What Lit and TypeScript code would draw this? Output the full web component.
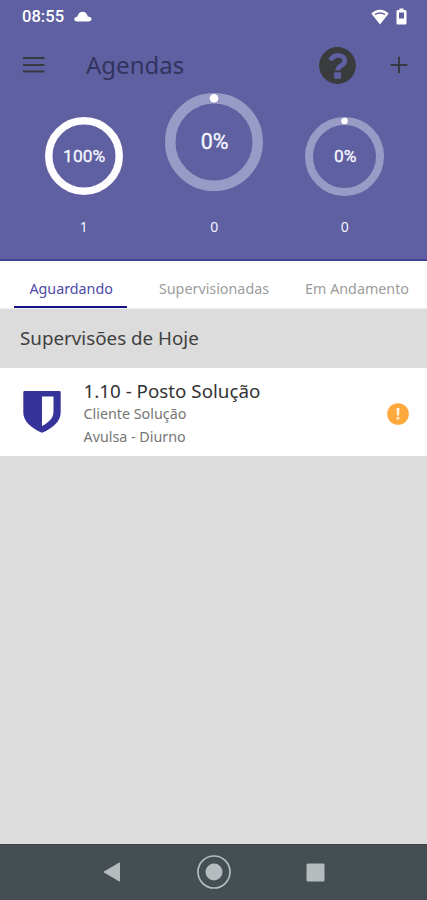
import { LitElement, html, svg, css, nothing } from "lit";
import { customElement, property } from "lit/decorators.js";

@customElement("progress-ring")
class ProgressRing extends LitElement {
  @property({ type: Number }) size = 78;
  @property({ type: Number }) stroke = 8;
  @property({ type: Number }) value = 0;

  static styles = css`
    :host { display: grid; place-items: center; }
    svg, span { grid-area: 1 / 1; }
    svg { display: block; }
    span {
      font-family: Roboto, sans-serif;
      color: #f6f7ff;
      line-height: 1;
      font-weight: 400;
      font-size: 17.4px;
      padding: 1px 0 0 1px;
      -webkit-text-stroke: 0.3px #f6f7ff;
    }
    .large { font-size: 21.5px; padding-top: 0; }
    .track { fill: none; stroke: #989bc6; }
    .full { fill: none; stroke: #fdfdff; }
    .dot { fill: #fff; }
  `;

  render() {
    const c = this.size / 2;
    const r = c - this.stroke / 2;
    return html`
      <svg width=${this.size} height=${this.size} viewBox="0 0 ${this.size} ${this.size}">
        <circle class=${this.value >= 100 ? "full" : "track"} cx=${c} cy=${c} r=${r} stroke-width=${this.stroke}></circle>
        ${this.value === 0
          ? svg`<circle class="dot" cx=${c} cy=${this.stroke / 2} r=${this.stroke * 0.41}></circle>`
          : nothing}
      </svg>
      <span class=${this.size > 90 ? "large" : ""}>${this.value}%</span>
    `;
  }
}

@customElement("app-root")
class AppRoot extends LitElement {
  static styles = css`
    :host {
      display: flex;
      flex-direction: column;
      height: 900px;
      width: 427px;
      overflow: hidden;
      background: #dcdcdc;
      font-family: "Noto Sans", sans-serif;
      white-space: nowrap;
    }
    * { box-sizing: border-box; }
    svg { display: block; flex: none; }
    .top {
      height: 261px;
      flex: none;
      background: #5e60a1;
      border-bottom: 2px solid #42429a;
      display: flex;
      flex-direction: column;
    }
    .status {
      height: 33px;
      padding: 0 20px 0 22px;
      display: flex;
      align-items: center;
      color: #fff;
      font: 500 16.6px/33px Roboto, sans-serif;
    }
    .cloud { margin-left: 10px; }
    .wifi { margin-left: auto; margin-right: 7px; }
    .bar {
      height: 64px;
      padding: 0 19px 0 23px;
      display: flex;
      align-items: center;
    }
    .title {
      margin-left: 41px;
      font-size: 24px;
      line-height: 32px;
      color: #34335f;
    }
    .help { margin-left: auto; margin-right: 34.5px; }
    .rings {
      margin-top: -5px;
      padding: 0 17px 0 18.4px;
      display: grid;
      grid-template-columns: repeat(3, 1fr);
    }
    .stat { display: flex; flex-direction: column; align-items: center; }
    .dial { height: 128px; display: flex; align-items: center; }
    .dial progress-ring { margin-bottom: 28px; }
    .dial.side progress-ring { margin-bottom: 0; }
    .count {
      font: 400 14px/16px "Noto Sans", sans-serif;
      color: #f2f3ff;
      margin-top: -1px;
    }
    .tabs {
      height: 48px;
      flex: none;
      background: #fff;
      display: grid;
      grid-template-columns: repeat(3, 1fr);
      border-bottom: 1px solid #efefef;
    }
    .tab {
      margin: 0 15px 0 14px;
      padding: 9px 0 0 1px;
      display: flex;
      justify-content: center;
      align-items: center;
      font-size: 14.3px;
      color: #9c9c9c;
      border-bottom: 2px solid transparent;
    }
    .tab + .tab { padding-left: 2px; }
    .tab:last-child { padding-left: 3.5px; }
    .tab.active { color: #4d4ba6; border-bottom-color: #17148a; }
    .section {
      height: 59px;
      flex: none;
      padding: 0 20px;
      font-size: 18.8px;
      line-height: 58px;
      color: #404040;
    }
    .item {
      height: 88px;
      flex: none;
      background: #fff;
      padding: 0 18px 0 23px;
      display: flex;
      align-items: center;
    }
    .info { margin-left: 22.5px; flex: 1; }
    .name { font-size: 18.8px; line-height: 24px; color: #333; margin-top: 3px; }
    .line { font-size: 14.3px; line-height: 22px; color: #767676; }
    .line + .line { margin-top: 1px; }
    .alert { margin-top: 3px; }
    .nav {
      margin-top: auto;
      height: 56px;
      flex: none;
      background: #454e53;
      border-top: 1px solid #38443f;
      display: flex;
      align-items: center;
      justify-content: space-between;
      padding: 0 102px 1px 103px;
    }
  `;

  render() {
    return html`
      <header class="top">
        <div class="status">
          <span>08:55</span>
          <svg class="cloud" width="18" height="12" viewBox="0 0 18 12">
            <path fill="#fff" d="M3.3 10.500C1.500 10.500.3 9.700.3 8.300c0-1.500 1.400-2.400 3-2.500C4 2.700 6 .8 8.700.8c2.600 0 4.500 1.800 5 4.600 2.100.1 3.800 1.100 3.800 2.700s-1.300 2.400-3 2.400z"/>
          </svg>
          <svg class="wifi" width="18" height="16" viewBox="0 0 18 16">
            <path fill="#fff" d="M9 15.500.3 4.600C2.700 2 5.700.7 9 .7s6.300 1.300 8.700 3.900z"/>
            <path fill="none" stroke="#5e60a1" stroke-width="1.300" d="M4 5.600Q9 2.400 14 5.600"/>
          </svg>
          <svg width="11" height="17" viewBox="0 0 11 17">
            <path fill="#fff" fill-rule="evenodd" d="M3.500.5h4V2H9.200q1.300 0 1.300 1.300V15.200q0 1.300-1.300 1.300H1.800Q.5 16.500.5 15.200V3.300Q.5 2 1.800 2h1.700zM3 4.500v6h5v-6z"/>
          </svg>
        </div>
        <div class="bar">
          <svg width="22" height="18" viewBox="0 0 22 18">
            <path stroke="#383a42" stroke-width="2" d="M0 2h21.500M0 9h21.500M0 15.500h21.500"/>
          </svg>
          <span class="title">Agendas</span>
          <svg class="help" width="37" height="37" viewBox="0 0 37 37">
            <circle cx="18.500" cy="18.500" r="18.400" fill="#393b3c"/>
            <path fill="none" stroke="#5e60a1" stroke-width="4.800" d="M11.500 13.200C13 10 15.300 8.300 18.800 8.300c4.200 0 7 2.300 7 5.600 0 5-7.100 4.400-7.100 9.500"/>
            <rect x="15.200" y="25.300" width="6.800" height="6.500" rx="1" fill="#5e60a1"/>
          </svg>
          <svg width="18" height="18" viewBox="0 0 18 18">
            <path stroke="#383a42" stroke-width="2" d="M.700 9h16.600M9 .700v16.600"/>
          </svg>
        </div>
        <div class="rings">
          <div class="stat">
            <div class="dial side"><progress-ring size="78" stroke="7.500" value="100"></progress-ring></div>
            <span class="count">1</span>
          </div>
          <div class="stat">
            <div class="dial"><progress-ring size="98" stroke="10.500" value="0"></progress-ring></div>
            <span class="count">0</span>
          </div>
          <div class="stat">
            <div class="dial side"><progress-ring size="79" stroke="8" value="0"></progress-ring></div>
            <span class="count">0</span>
          </div>
        </div>
      </header>
      <nav class="tabs">
        <div class="tab active">Aguardando</div>
        <div class="tab">Supervisionadas</div>
        <div class="tab">Em Andamento</div>
      </nav>
      <div class="section">Supervisões de Hoje</div>
      <div class="item">
        <svg width="38" height="42" viewBox="0 0 38 42">
          <path fill="#36349a" d="M1.500 0h35q1.200 0 1.200 1.200v20.300c0 8.500-7.500 15.500-18.700 20.300C7.800 37 .3 30 .3 21.500V1.200Q.3 0 1.500 0z"/>
          <path fill="#fff" d="M19 5.500h11.500V21c0 6-5 10.500-11.500 14z"/>
        </svg>
        <div class="info">
          <div class="name">1.10 - Posto Solução</div>
          <div class="line">Cliente Solução</div>
          <div class="line">Avulsa - Diurno</div>
        </div>
        <svg class="alert" width="22" height="22" viewBox="0 0 22 22">
          <circle cx="11" cy="11" r="10.800" fill="#fea93c"/>
          <path fill="#fff3e0" d="M9.500 5h3l-.4 7.500H9.900zM9.700 14h2.600v2.600H9.700z"/>
        </svg>
      </div>
      <footer class="nav">
        <svg width="18" height="20" viewBox="0 0 18 20">
          <path fill="#b4bcbe" stroke="#b4bcbe" stroke-linejoin="round" d="M1 10 16.500.900v18.200z"/>
        </svg>
        <svg width="34" height="34" viewBox="0 0 34 34">
          <circle cx="17" cy="17" r="16" fill="none" stroke="#b4bcbe" stroke-width="1.700"/>
          <circle cx="17" cy="17" r="8.500" fill="#b4bcbe"/>
        </svg>
        <svg width="19" height="19" viewBox="0 0 19 19">
          <rect x=".5" y=".5" width="18" height="18" rx="1.500" fill="#b4bcbe"/>
        </svg>
      </footer>
    `;
  }
}
